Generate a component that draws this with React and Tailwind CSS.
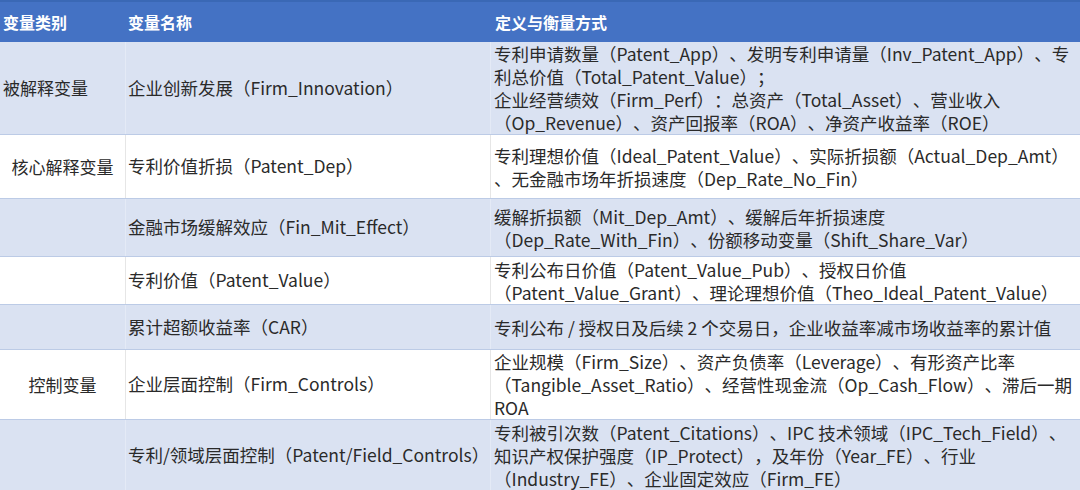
import React from 'react';

const rows = [
  {
    cat: '被解释变量',
    catAlign: 'justify-start pl-[3px]',
    name: '企业创新发展（Firm_Innovation）',
    defs: [
      '专利申请数量（Patent_App）、发明专利申请量（Inv_Patent_App）、专',
      '利总价值（Total_Patent_Value）；',
      '企业经营绩效（Firm_Perf）：总资产（Total_Asset）、营业收入',
      '（Op_Revenue）、资产回报率（ROA）、净资产收益率（ROE）',
    ],
    h: 'h-[93px]',
    shade: true,
  },
  {
    cat: '核心解释变量',
    catAlign: 'justify-center',
    name: '专利价值折损（Patent_Dep）',
    defs: [
      '专利理想价值（Ideal_Patent_Value）、实际折损额（Actual_Dep_Amt）',
      '、无金融市场年折损速度（Dep_Rate_No_Fin）',
    ],
    h: 'h-[64px]',
    shade: false,
  },
  {
    cat: '',
    name: '金融市场缓解效应（Fin_Mit_Effect）',
    defs: [
      '缓解折损额（Mit_Dep_Amt）、缓解后年折损速度',
      '（Dep_Rate_With_Fin）、份额移动变量（Shift_Share_Var）',
    ],
    h: 'h-[58px]',
    shade: true,
  },
  {
    cat: '',
    name: '专利价值（Patent_Value）',
    defs: [
      '专利公布日价值（Patent_Value_Pub）、授权日价值',
      '（Patent_Value_Grant）、理论理想价值（Theo_Ideal_Patent_Value）',
    ],
    h: 'h-[48px]',
    shade: false,
  },
  {
    cat: '',
    name: '累计超额收益率（CAR）',
    defs: ['专利公布 / 授权日及后续 2 个交易日，企业收益率减市场收益率的累计值'],
    h: 'h-[45px]',
    shade: true,
  },
  {
    cat: '控制变量',
    catAlign: 'justify-center',
    name: '企业层面控制（Firm_Controls）',
    defs: [
      '企业规模（Firm_Size）、资产负债率（Leverage）、有形资产比率',
      '（Tangible_Asset_Ratio）、经营性现金流（Op_Cash_Flow）、滞后一期',
      'ROA',
    ],
    h: 'h-[70px]',
    shade: false,
  },
  {
    cat: '',
    name: '专利/领域层面控制（Patent/Field_Controls）',
    defs: [
      '专利被引次数（Patent_Citations）、IPC 技术领域（IPC_Tech_Field）、',
      '知识产权保护强度（IP_Protect），及年份（Year_FE）、行业',
      '（Industry_FE）、企业固定效应（Firm_FE）',
    ],
    h: 'h-[72px]',
    shade: true,
  },
];

const Row = ({ row }) => {
  const bg = row.shade ? 'bg-[#dae2f2]' : 'bg-white';
  const line = row.shade ? 'border-[#e4eaf6]' : 'border-[#e6e6e6]';
  return (
    <div className={`grid grid-cols-[126px_365px_1fr] ${row.h} ${bg} border-b border-[#bccbe6]`}>
      <div className={`flex items-center ${row.catAlign || 'justify-center'} border-r ${line}`}>
        {row.cat}
      </div>
      <div className={`flex items-center pl-[2px] whitespace-nowrap text-[17.5px] border-r ${line}`}>
        {row.name}
      </div>
      <div className="flex flex-col justify-center pl-[3px] text-[17.5px] leading-[23px]">
        {row.defs.map((text, i) => (
          <div key={i} className="whitespace-nowrap">
            {text}
          </div>
        ))}
      </div>
    </div>
  );
};

export default function App() {
  return (
    <div
      className="w-[1080px] h-[490px] overflow-hidden bg-white text-[17px] text-[#2a2a2a] [text-spacing-trim:space-all]"
      style={{ fontFamily: '"Noto Sans CJK SC", "Noto Sans", sans-serif' }}
    >
      <div className="grid grid-cols-[126px_365px_1fr] h-[42px] bg-[#4472c4] border-t-2 border-[#3a68b5] text-white font-bold text-[16px]">
        <div className="flex items-center pl-[3px]">变量类别</div>
        <div className="flex items-center pl-[2px]">变量名称</div>
        <div className="flex items-center pl-[4px]">定义与衡量方式</div>
      </div>
      {rows.map((row, i) => (
        <Row key={i} row={row} />
      ))}
    </div>
  );
}
